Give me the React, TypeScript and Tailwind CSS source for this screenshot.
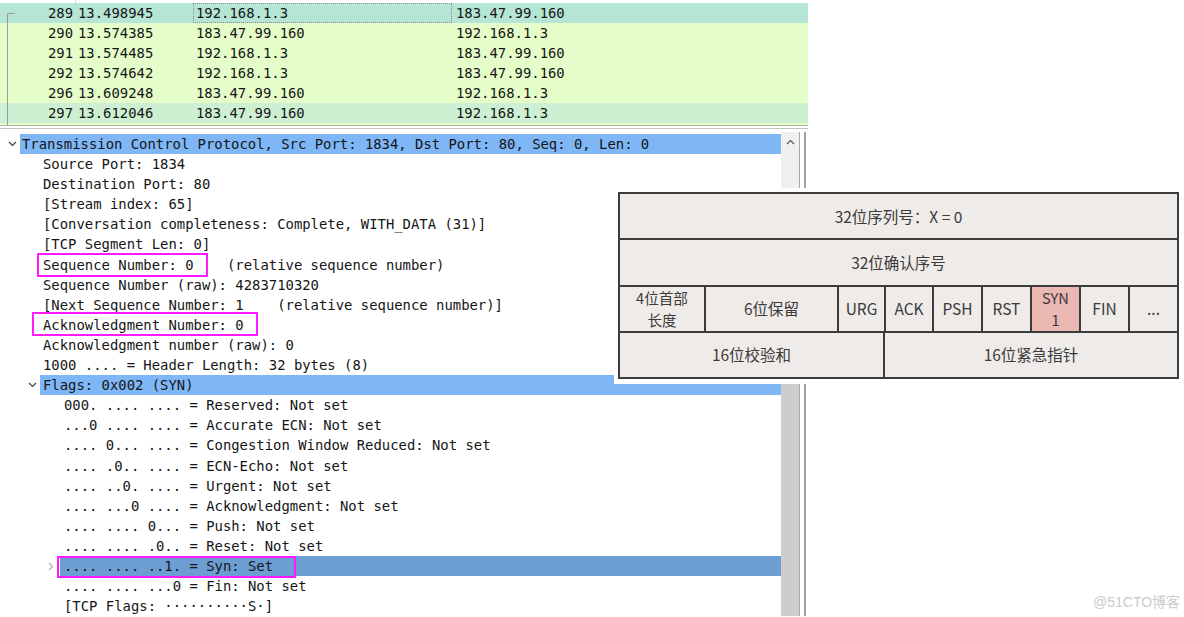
import React from "react";

const mono = { fontFamily: '"DejaVu Sans Mono", "Liberation Mono", monospace' };

type Pkt = { no: string; time: string; src: string; dst: string; bg: string; focus?: boolean };

const packets: Pkt[] = [
  { no: "289", time: "13.498945", src: "192.168.1.3", dst: "183.47.99.160", bg: "bg-[#b5e5d5]", focus: true },
  { no: "290", time: "13.574385", src: "183.47.99.160", dst: "192.168.1.3", bg: "bg-[#e5fdc9]" },
  { no: "291", time: "13.574485", src: "192.168.1.3", dst: "183.47.99.160", bg: "bg-[#e5fdc9]" },
  { no: "292", time: "13.574642", src: "192.168.1.3", dst: "183.47.99.160", bg: "bg-[#e5fdc9]" },
  { no: "296", time: "13.609248", src: "183.47.99.160", dst: "192.168.1.3", bg: "bg-[#e5fdc9]" },
  { no: "297", time: "13.612046", src: "183.47.99.160", dst: "192.168.1.3", bg: "bg-[#cdf0d2]" },
];

type Line = { lvl: 0 | 1 | 2; text: string; open?: boolean; closed?: boolean; bg?: string };

const lines: Line[] = [
  { lvl: 0, open: true, bg: "bg-[#7eb6f6]", text: "Transmission Control Protocol, Src Port: 1834, Dst Port: 80, Seq: 0, Len: 0" },
  { lvl: 1, text: "Source Port: 1834" },
  { lvl: 1, text: "Destination Port: 80" },
  { lvl: 1, text: "[Stream index: 65]" },
  { lvl: 1, text: "[Conversation completeness: Complete, WITH_DATA (31)]" },
  { lvl: 1, text: "[TCP Segment Len: 0]" },
  { lvl: 1, text: "Sequence Number: 0    (relative sequence number)" },
  { lvl: 1, text: "Sequence Number (raw): 4283710320" },
  { lvl: 1, text: "[Next Sequence Number: 1    (relative sequence number)]" },
  { lvl: 1, text: "Acknowledgment Number: 0" },
  { lvl: 1, text: "Acknowledgment number (raw): 0" },
  { lvl: 1, text: "1000 .... = Header Length: 32 bytes (8)" },
  { lvl: 1, open: true, bg: "bg-[#7eb6f6]", text: "Flags: 0x002 (SYN)" },
  { lvl: 2, text: "000. .... .... = Reserved: Not set" },
  { lvl: 2, text: "...0 .... .... = Accurate ECN: Not set" },
  { lvl: 2, text: ".... 0... .... = Congestion Window Reduced: Not set" },
  { lvl: 2, text: ".... .0.. .... = ECN-Echo: Not set" },
  { lvl: 2, text: ".... ..0. .... = Urgent: Not set" },
  { lvl: 2, text: ".... ...0 .... = Acknowledgment: Not set" },
  { lvl: 2, text: ".... .... 0... = Push: Not set" },
  { lvl: 2, text: ".... .... .0.. = Reset: Not set" },
  { lvl: 2, closed: true, bg: "bg-[#6c9ed4]", text: ".... .... ..1. = Syn: Set" },
  { lvl: 2, text: ".... .... ...0 = Fin: Not set" },
  { lvl: 2, text: "[TCP Flags: ··········S·]" },
];

const indent = { 0: "w-[20px]", 1: "w-[40px]", 2: "w-[60px]" };
const pad = { 0: "pl-[2px]", 1: "pl-[3px]", 2: "pl-[4px]" };

const ChevronDown = () => (
  <svg width="9" height="6" viewBox="0 0 9 6" className="mr-[3px]">
    <path d="M1 1l3.5 3.5L8 1" fill="none" stroke="#444" strokeWidth="1.2" />
  </svg>
);

const ChevronRight = () => (
  <svg width="6" height="9" viewBox="0 0 6 9" className="mr-[6px]">
    <path d="M1 1l3.5 3.5L1 8" fill="none" stroke="#aaa" strokeWidth="1.2" />
  </svg>
);

const PacketList = () => (
  <div className="bg-[#e5fdc9]">
    <div className="h-[3px] flex bg-white">
      <div className="w-[75px]" />
      <div className="w-px bg-[#d4d4d4]" />
    </div>
    {packets.map((p, i) => (
      <div key={p.no} className={`flex h-[20px] leading-[20px] ${p.bg}`}>
        <div className="w-[16px] h-full">
          {i === 0 ? (
            <div className="ml-[7px] mt-[10px] h-[10px] w-[8px] border-l border-t border-[#9a9a9a]" />
          ) : (
            <div className="ml-[7px] h-full border-l border-[#9a9a9a]" />
          )}
        </div>
        <div className="w-[57px] text-right">{p.no}</div>
        <div className="w-[120px] pl-[5px]">{p.time}</div>
        <div className={`w-[259px] pl-[3px] ${p.focus ? "outline outline-1 outline-dotted outline-[#8a8a8a] -outline-offset-1" : ""}`}>
          {p.src}
        </div>
        <div className="flex-1 pl-[4px]">{p.dst}</div>
      </div>
    ))}
    <div className="h-[2px] flex">
      <div className="ml-[7px] border-l border-[#9a9a9a]" />
    </div>
    <div className="h-px bg-[#b4b4b4]" />
  </div>
);

const DetailPane = () => (
  <div className="flex h-[488px] border-t border-[#c4c4c4] mt-[2px] bg-white">
    <div className="w-[781px] pt-[5px]">
      {lines.map((l, i) => (
        <div key={i} className="flex h-[20.1px] items-center whitespace-pre">
          <div className={`${indent[l.lvl]} h-full flex items-center justify-end`}>
            {l.open && <ChevronDown />}
            {l.closed && <ChevronRight />}
          </div>
          <div className={`flex-1 h-full leading-[20px] ${pad[l.lvl]} ${l.bg ?? ""}`}>{l.text}</div>
        </div>
      ))}
    </div>
    <div className="w-[19px] mt-[3px] flex flex-col bg-[#f0f0f0] border-r border-[#a8a8a8]">
      <div className="h-[20px] flex items-center justify-center">
        <svg width="9" height="6" viewBox="0 0 9 6">
          <path d="M1 5l3.5-3.5L8 5" fill="none" stroke="#555" strokeWidth="1.2" />
        </svg>
      </div>
      <div className="h-[40px]" />
      <div className="flex-1 bg-[#cdcdcd]" />
    </div>
    <div className="w-[4px]" />
    <div className="w-[2px] bg-[#a0a0a0] mt-[3px]" />
    <div className="w-[2px]" />
  </div>
);

const cell = "bg-[#eeebe9] flex items-center justify-center text-center leading-[19px]";
const twoLine = "flex flex-col items-center justify-center text-center leading-[21px] text-[14.6px]";

const TcpTable = () => (
  <div
    className="absolute left-[614px] top-[188px] w-[570px] h-[196px] bg-white pt-[4px] pl-[4px] pr-[5px] pb-[5px]"
    style={{ fontFamily: '"Noto Sans CJK SC", "Noto Sans", sans-serif' }}
  >
    <div className="w-full h-full grid grid-rows-4 gap-[2px] p-[2px] bg-[#3c3c3c] text-[15.5px] text-[#3a3a3a]">
      <div className={cell}>32位序列号：X = 0</div>
      <div className={cell}>32位确认序号</div>
      <div className="grid grid-cols-[84px_131px_45px_46px_47px_47px_47px_47px_1fr] gap-[2px]">
        <div className={`bg-[#eeebe9] ${twoLine}`}>
          <div className="h-[21.5px]">4位首部</div>
          <div className="h-[21.5px]">长度</div>
        </div>
        <div className={cell}>6位保留</div>
        <div className={cell}>URG</div>
        <div className={cell}>ACK</div>
        <div className={cell}>PSH</div>
        <div className={cell}>RST</div>
        <div className={`bg-[#eab7b3] ${twoLine}`}>
          <div className="h-[21.5px]">SYN</div>
          <div className="h-[21.5px]">1</div>
        </div>
        <div className={cell}>FIN</div>
        <div className={cell}>...</div>
      </div>
      <div className="grid grid-cols-[263px_1fr] gap-[2px]">
        <div className={cell}>16位校验和</div>
        <div className={cell}>16位紧急指针</div>
      </div>
    </div>
  </div>
);

export default function App() {
  return (
    <div className="relative w-[1184px] h-[617px] overflow-hidden bg-white text-[13.9px] text-[#151515]" style={mono}>
      <div className="w-[808px]">
        <PacketList />
        <DetailPane />
      </div>

      {/* annotation boxes */}
      <div className="absolute left-[37px] top-[253px] w-[171px] h-[24px] border-2 border-[#ff1aff]" />
      <div className="absolute left-[32px] top-[312px] w-[226px] h-[24px] border-2 border-[#ff1aff]" />
      <div className="absolute left-[57px] top-[556px] w-[239px] h-[22px] border-2 border-[#ff1aff]" />

      <TcpTable />

      <div
        className="absolute left-[1093px] top-[592px] text-[14px] text-[#cbcbcb]"
        style={{ fontFamily: '"Liberation Sans", "Noto Sans CJK SC", sans-serif' }}
      >
        @51CTO博客
      </div>
    </div>
  );
}
